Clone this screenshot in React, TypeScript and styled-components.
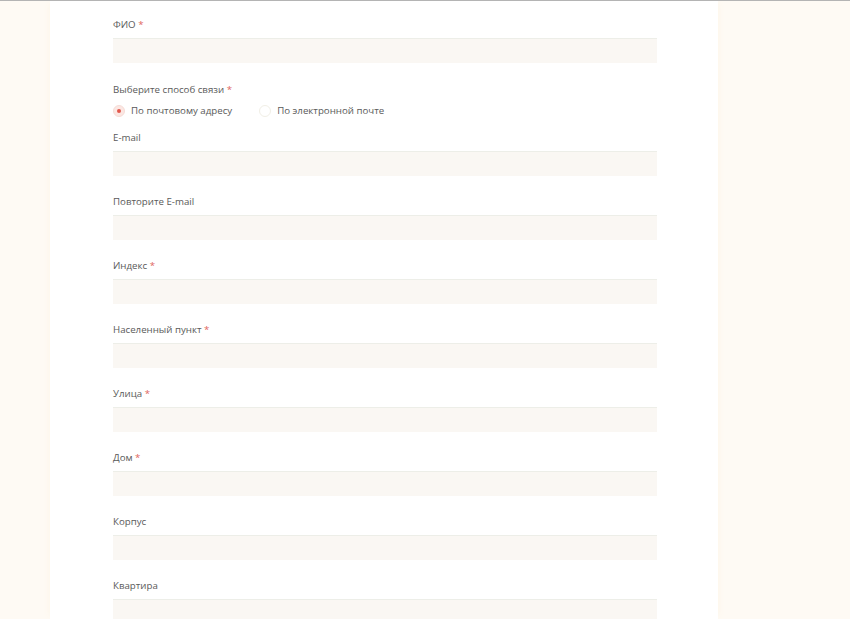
import styled, { createGlobalStyle } from "styled-components"

const GlobalStyle = createGlobalStyle`
    html, body{
        margin: 0;
        padding: 0;
        background-color: #fefaf4;
        font-family: "Open Sans", "Liberation Sans", sans-serif;
    }
    *{
        box-sizing: border-box;
    }
`

type Field = { label: string; required?: boolean }

const addressFields: Field[] = [
    { label: 'E-mail' },
    { label: 'Повторите E-mail' },
    { label: 'Индекс', required: true },
    { label: 'Населенный пункт', required: true },
    { label: 'Улица', required: true },
    { label: 'Дом', required: true },
    { label: 'Корпус' },
    { label: 'Квартира' },
]

export default function App(){
    return(
        <>
            <GlobalStyle />
            <Page>
                <Panel>
                    <FieldBox>
                        <Label>ФИО <Star>*</Star></Label>
                        <Input type="text" />
                    </FieldBox>
                    <Group>
                        <Label>Выберите способ связи <Star>*</Star></Label>
                        <RadioRow>
                            <RadioOption>
                                <Radio $checked />
                                По почтовому адресу
                            </RadioOption>
                            <RadioOption>
                                <Radio />
                                По электронной почте
                            </RadioOption>
                        </RadioRow>
                    </Group>
                    {addressFields.map(f => (
                        <FieldBox key={f.label}>
                            <Label>{f.label}{f.required && <> <Star>*</Star></>}</Label>
                            <Input type="text" />
                        </FieldBox>
                    ))}
                </Panel>
            </Page>
        </>
    )
}

const Page = styled.div`
    width: 100%;
    height: 619px;
    overflow: hidden;
    border-top: 1px solid #b4b4b4;
    display: flex;
    justify-content: flex-start;
    padding-left: 50px;
`

const Panel = styled.div`
    width: 668px;
    background-color: #fff;
    padding: 17px 61px 0 63px;
    box-shadow: -4px 0 6px -3px #fdf6ea, 4px 0 6px -3px #fdf6ea;
    display: flex;
    flex-direction: column;
`

const FieldBox = styled.div`
    display: flex;
    flex-direction: column;
    margin-bottom: 19px;
`

const Group = styled.div`
    display: flex;
    flex-direction: column;
    margin-top: 1px;
    margin-bottom: 12px;
`

const Label = styled.label`
    display: block;
    font-size: 9.7px;
    line-height: 14px;
    color: #5a5a5a;
    margin-bottom: 6px;
`

const Star = styled.span`
    color: #e0655d;
`

const Input = styled.input`
    width: 100%;
    height: 25px;
    border: none;
    border-top: 1px solid #edeee8;
    background-color: #faf7f3;
    outline: none;
    padding: 0 8px;
`

const RadioRow = styled.div`
    display: flex;
    align-items: center;
    gap: 27px;
`

const RadioOption = styled.label`
    display: flex;
    align-items: center;
    gap: 6px;
    font-size: 9.7px;
    line-height: 16px;
    color: #5a5a5a;
`

const Radio = styled.span<{ $checked?: boolean }>`
    width: 12px;
    height: 12px;
    border-radius: 50%;
    background-color: ${p => p.$checked ? '#fbe7e3' : '#fff'};
    border: 1px solid ${p => p.$checked ? '#f6dcd6' : '#f1efe6'};
    display: flex;
    align-items: center;
    justify-content: center;
    &::after{
        content: '';
        width: 4px;
        height: 4px;
        border-radius: 50%;
        background-color: #e2574c;
        display: ${p => p.$checked ? 'block' : 'none'};
    }
`
